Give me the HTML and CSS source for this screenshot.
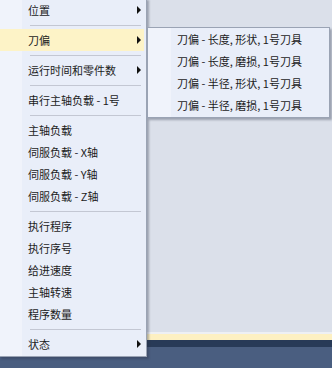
FILE: index.html
```html
<!DOCTYPE html>
<html>
<head>
<meta charset="utf-8">
<link rel="stylesheet" href="styles.css">
</head>
<body>
<div class="app">
  <div class="workspace"></div>
  <div class="edge-line"></div>
  <div class="cream-strip"></div>
  <div class="navy-band"></div>
  <div class="lower-area"></div>
</div>

<div class="menu main-menu">
  <div class="item has-sub"><span class="label">位置</span><span class="arrow"></span></div>
  <div class="sep"></div>
  <div class="item has-sub active"><span class="label">刀偏</span><span class="arrow"></span></div>
  <div class="sep"></div>
  <div class="item has-sub"><span class="label">运行时间和零件数</span><span class="arrow"></span></div>
  <div class="sep"></div>
  <div class="item"><span class="label">串行主轴负载 - 1号</span></div>
  <div class="sep"></div>
  <div class="item"><span class="label">主轴负载</span></div>
  <div class="item"><span class="label">伺服负载 - X轴</span></div>
  <div class="item"><span class="label">伺服负载 - Y轴</span></div>
  <div class="item"><span class="label">伺服负载 - Z轴</span></div>
  <div class="sep"></div>
  <div class="item"><span class="label">执行程序</span></div>
  <div class="item"><span class="label">执行序号</span></div>
  <div class="item"><span class="label">给进速度</span></div>
  <div class="item"><span class="label">主轴转速</span></div>
  <div class="item"><span class="label">程序数量</span></div>
  <div class="sep"></div>
  <div class="item has-sub"><span class="label">状态</span><span class="arrow"></span></div>
</div>

<div class="menu sub-menu">
  <div class="item"><span class="label">刀偏 - 长度, 形状, 1号刀具</span></div>
  <div class="item"><span class="label">刀偏 - 长度, 磨损, 1号刀具</span></div>
  <div class="item"><span class="label">刀偏 - 半径, 形状, 1号刀具</span></div>
  <div class="item"><span class="label">刀偏 - 半径, 磨损, 1号刀具</span></div>
</div>
</body>
</html>
```
FILE: styles.css
```css
html, body {
  margin: 0;
  padding: 0;
  width: 332px;
  height: 368px;
  overflow: hidden;
  font-family: "Noto Sans CJK SC", "Noto Sans", sans-serif;
  font-size: 11px;
  color: #1c1c1c;
}

.app {
  display: flex;
  flex-direction: column;
  height: 368px;
}
.workspace {
  flex: 0 0 332px;
  background: #dbe0ea;
}
.edge-line {
  flex: 0 0 2px;
  background: #eef0f4;
}
.cream-strip {
  flex: 0 0 6px;
  background: #fdf0c2;
}
.navy-band {
  flex: 0 0 7px;
  background: #283a57;
}
.lower-area {
  flex: 1;
  background: #4a5e80;
}

.menu {
  position: absolute;
  box-sizing: border-box;
  border: 1px solid #9aa3b4;
  background: linear-gradient(to right, #f0f3fb 0, #f0f3fb 22px, #e9eef9 22px);
  box-shadow: 2px 2px 2px rgba(40, 50, 70, 0.35);
  padding: 0 2px 1px 0;
}

.main-menu {
  left: -1px;
  top: -2px;
  width: 148px;
}

.sub-menu {
  left: 147px;
  top: 27px;
  width: 183px;
  background: linear-gradient(to right, #f0f3fb 0, #f0f3fb 23px, #e9eef9 23px);
}

.item {
  height: 22px;
  display: flex;
  align-items: center;
  padding-left: 28px;
  position: relative;
  white-space: nowrap;
}
.sub-menu .item {
  padding-left: 29px;
}
.item .label {
  line-height: 22px;
  transform: translateY(0px);
}
.item.active {
  background: #fdf3c7;
}
.arrow {
  position: absolute;
  left: 137px;
  top: 7px;
  width: 0;
  height: 0;
  border-top: 4px solid transparent;
  border-bottom: 4px solid transparent;
  border-left: 4px solid #111;
}

.sep {
  height: 8px;
  position: relative;
}
.sep::after {
  content: "";
  position: absolute;
  left: 30px;
  right: 3px;
  top: 4px;
  height: 1px;
  background: #c3c7d3;
}
```
